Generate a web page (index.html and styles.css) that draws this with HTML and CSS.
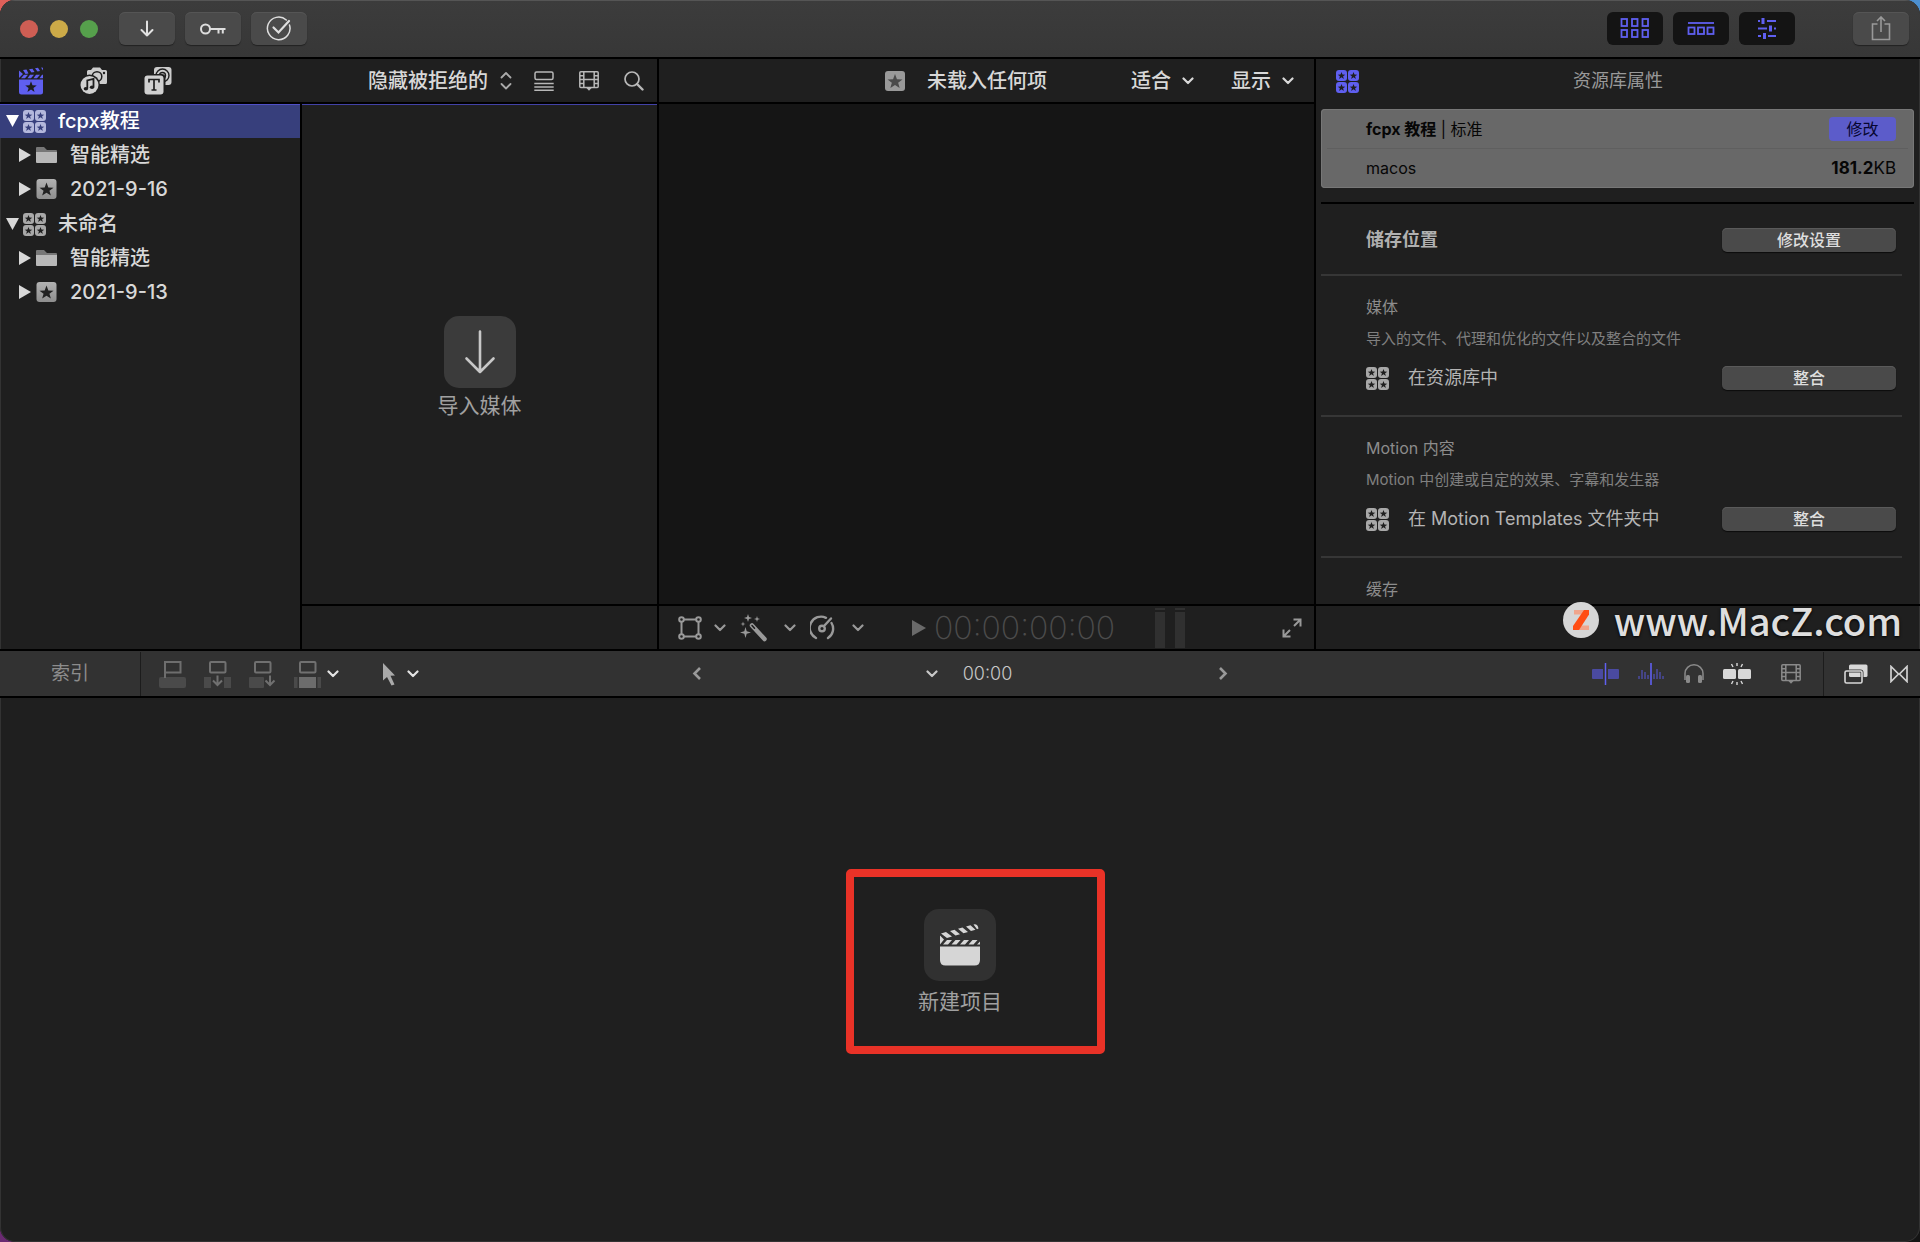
FILE: index.html
```html
<!DOCTYPE html>
<html lang="zh-CN">
<head>
<meta charset="utf-8">
<title>Final Cut Pro</title>
<link rel="stylesheet" href="styles.css">
</head>
<body>
<svg class="defs" aria-hidden="true">
  <defs>
    <path id="star" d="M0-5 1.3-1.5 5-1.4 2.1.8 3.1 4.3 0 2.2-3.1 4.3-2.1.8-5-1.4-1.3-1.5Z"/>
    <mask id="tile-mask" maskUnits="userSpaceOnUse" x="0" y="0" width="24" height="24">
      <rect width="24" height="24" fill="#fff"/>
      <g fill="#000">
        <use href="#star" transform="translate(5.5 5.7) scale(.76)"/>
        <use href="#star" transform="translate(17.5 5.7) scale(.76)"/>
        <use href="#star" transform="translate(5.5 17.7) scale(.76)"/>
        <use href="#star" transform="translate(17.5 17.7) scale(.76)"/>
      </g>
    </mask>
    <linearGradient id="silver" x1="0" y1="0" x2="0" y2="1">
      <stop offset="0" stop-color="#b2b2b2"/><stop offset="1" stop-color="#8e8e8e"/>
    </linearGradient>
    <symbol id="library" viewBox="0 0 23 23">
      <g mask="url(#tile-mask)" fill="currentColor">
        <rect width="11" height="11" rx="3"/><rect x="12" width="11" height="11" rx="3"/>
        <rect y="12" width="11" height="11" rx="3"/><rect x="12" y="12" width="11" height="11" rx="3"/>
      </g>
    </symbol>
    <symbol id="event" viewBox="0 0 20 20">
      <rect width="20" height="20" rx="3" fill="url(#silver)"/>
      <use href="#star" transform="translate(10 10.6) scale(1.4)" fill="#222"/>
    </symbol>
    <symbol id="folder" viewBox="0 0 21 16">
      <path d="M0 1Q0 0 1 0H8L11 3H20Q21 3 21 4V5H0Z" fill="#777"/>
      <path d="M0 5H21V15Q21 16 20 16H1Q0 16 0 15Z" fill="#b8b8b8"/>
    </symbol>
    <symbol id="chev" viewBox="0 0 12 8">
      <path d="M1.5 1.5 6 6 10.500 1.500" fill="none" stroke="currentColor" stroke-width="2.200" stroke-linecap="round" stroke-linejoin="round"/>
    </symbol>
    <symbol id="film" viewBox="0 0 20 20">
      <g fill="none" stroke="currentColor" stroke-width="1.500">
        <rect x=".8" y=".8" width="18.400" height="15.600" rx="1"/>
        <path d="M4.800 1V16.500M15.200 1V16.500M4.800 8.600H15.200M1 4.700H4.800M1 8.600H4.800M1 12.500H4.800M15.200 4.700H19M15.200 8.600H19M15.200 12.500H19"/>
      </g>
      <path d="M7 16.500H13L10 19.800Z" fill="currentColor"/>
    </symbol>
    <symbol id="right" viewBox="0 0 12 14"><path d="M0 0 12 7 0 14Z" fill="currentColor"/></symbol>
    <symbol id="down" viewBox="0 0 13 12"><path d="M0 0H13L6.500 12Z" fill="currentColor"/></symbol>
  </defs>
</svg>

<div class="window">
  <header class="titlebar">
    <div class="lights"><button class="light red" aria-label="关闭"></button><button class="light yellow" aria-label="最小化"></button><button class="light green" aria-label="缩放"></button></div>
    <div class="tools">
      <button class="tool" aria-label="导入">
        <svg width="14" height="18" viewBox="0 0 14 18" fill="none" stroke="#e2e2e2" stroke-width="2" stroke-linecap="round" stroke-linejoin="round"><path d="M7 1.500V15.500M1.500 10 7 15.500 12.500 10"/></svg>
      </button>
      <button class="tool" aria-label="关键词">
        <svg width="26" height="14" viewBox="0 0 26 14" fill="none" stroke="#dedede" stroke-width="2"><circle cx="5.500" cy="7" r="4.500"/><path d="M10 7H25.500M18.500 7V11.500M22.800 7V11.500"/></svg>
      </button>
      <button class="tool" aria-label="后台任务">
        <svg width="26" height="26" viewBox="0 0 26 26" fill="none" stroke="#dedede" stroke-width="1.500" stroke-linecap="round"><path d="M20.300 4A11.300 11.300 0 1 0 23.500 9"/><path d="M7.500 11.500 12.500 16.500 23 5" stroke-width="2.200"/></svg>
      </button>
    </div>
    <div class="views">
      <button class="tool dark" aria-label="浏览器">
        <svg width="30" height="22" viewBox="0 0 30 22" fill="none" stroke="#5f5ff0" stroke-width="1.800"><rect x="1.500" y="1" width="5.500" height="7"/><rect x="12" y="1" width="5.500" height="7"/><rect x="22.500" y="1" width="5.500" height="7"/><rect x="1.500" y="12" width="5.500" height="7"/><rect x="12" y="12" width="5.500" height="7"/><rect x="22.500" y="12" width="5.500" height="7"/></svg>
      </button>
      <button class="tool dark" aria-label="时间线">
        <svg width="28" height="22" viewBox="0 0 28 22" fill="none" stroke="#5f5ff0" stroke-width="1.800"><path d="M1 5H27"/><rect x="1.500" y="9.500" width="6" height="6.500"/><rect x="11" y="9.500" width="6" height="6.500"/><rect x="20.500" y="9.500" width="6" height="6.500"/></svg>
      </button>
      <button class="tool dark" aria-label="检查器">
        <svg width="20" height="22" viewBox="0 0 20 22" stroke="#5f5ff0" fill="none" stroke-width="1.800"><path d="M1 3H3M10 3H19M1 10.500H10M17 10.500H19M1 18H4M11 18H19"/><path d="M6 0V6M13.500 7.500V13.500M7.500 15V21" stroke-width="3"/></svg>
      </button>
    </div>
    <button class="tool" aria-label="共享">
      <svg width="20" height="26" viewBox="0 0 20 26" fill="none" stroke="#999" stroke-width="1.600"><path d="M6.500 8H1.500V23.500H18.500V8H13.500M10 16V1M6 5 10 1 14 5"/></svg>
    </button>
  </header>

  <main class="upper">
    <section class="library">
      <div class="bar librarybar">
        <button class="bare" aria-label="资源库">
          <svg width="26" height="28" viewBox="0 0 26 28"><g fill="#5f5ff0"><path d="M1 12.500H25V25Q25 27.500 22.500 27.500H3.500Q1 27.500 1 25Z"/><path d="M1 3.500 5 7 1 11ZM5 3 8.500 2.500 10.500 6.500 7.500 7ZM11 2.200 14.500 1.700 16.500 5 13.500 5.500ZM17 1.200 20 .8 22 4 19.500 4.500ZM23 .5 25 .8V3.500ZM6 7.800H10L7 11.300H3ZM12 7.800H16L13 11.300H9.500ZM18 7.800H22L19 11.300H15.500ZM24 7.800H25V11.300H21.500Z"/></g><use href="#star" transform="translate(13 20) scale(1.150)" fill="#1e1e1e"/></svg>
        </button>
        <button class="bare" aria-label="照片和音频">
          <svg width="28" height="28" viewBox="0 0 28 28"><path d="M7 4.500Q7 3 8.500 3H11L13 .5H20L22 3H25.500Q27 3 27 4.500V15.500Q27 17 25.500 17H7Z" fill="#ccc"/><circle cx="17" cy="9.500" r="4.800" fill="#ccc" stroke="#1e1e1e" stroke-width="1.500"/><circle cx="24" cy="6" r="1.200" fill="#1e1e1e"/><circle cx="9.500" cy="18" r="10.500" fill="#1e1e1e"/><circle cx="9.500" cy="18" r="9" fill="#d0d0d0"/><path d="M7.300 21.500V13.500L13.500 12V20" fill="none" stroke="#1e1e1e" stroke-width="1.800"/><ellipse cx="5.900" cy="21.700" rx="2.200" ry="1.800" fill="#1e1e1e"/><ellipse cx="12" cy="20.200" rx="2.200" ry="1.800" fill="#1e1e1e"/></svg>
        </button>
        <button class="bare" aria-label="字幕和发生器">
          <svg width="28" height="28" viewBox="0 0 28 28"><rect x="10" width="17.500" height="18" rx="3" fill="#ccc"/><g fill="none" stroke="#1e1e1e" stroke-width="1.400"><circle cx="18.500" cy="8.500" r="6.500"/><circle cx="18.500" cy="8.500" r="3"/></g><rect x="-1" y="7" width="22.500" height="22" rx="4" fill="#1e1e1e"/><rect x=".5" y="8.500" width="19" height="19" rx="3" fill="#d0d0d0"/><path d="M5 15.500V12.500H15V15.500M10 12.500V23M7.500 23H12.500" fill="none" stroke="#1e1e1e" stroke-width="1.700"/></svg>
        </button>
      </div>
      <ul class="tree">
        <li>
          <div class="node selected"><svg width="13" height="12"><use href="#down"/></svg><svg width="23" height="23"><use href="#library"/></svg><span>fcpx教程</span></div>
          <ul>
            <li class="node child"><svg width="12" height="14"><use href="#right"/></svg><svg width="21" height="16"><use href="#folder"/></svg><span>智能精选</span></li>
            <li class="node child"><svg width="12" height="14"><use href="#right"/></svg><svg width="21" height="20"><use href="#event"/></svg><span>2021-9-16</span></li>
          </ul>
        </li>
        <li>
          <div class="node"><svg width="13" height="12"><use href="#down"/></svg><svg class="gray" width="23" height="23"><use href="#library"/></svg><span>未命名</span></div>
          <ul>
            <li class="node child"><svg width="12" height="14"><use href="#right"/></svg><svg width="21" height="16"><use href="#folder"/></svg><span>智能精选</span></li>
            <li class="node child"><svg width="12" height="14"><use href="#right"/></svg><svg width="21" height="20"><use href="#event"/></svg><span>2021-9-13</span></li>
          </ul>
        </li>
      </ul>
    </section>

    <section class="browser">
      <div class="bar browserbar">
        <button class="bare filter">隐藏被拒绝的
          <svg width="12" height="18" viewBox="0 0 12 18" fill="none" stroke="#aaa" stroke-width="1.800" stroke-linecap="round" stroke-linejoin="round"><path d="M1.500 5.500 6 1 10.500 5.500M1.500 12 6 16.500 10.500 12"/></svg>
        </button>
        <button class="bare" aria-label="列表"><svg width="20" height="20" viewBox="0 0 20 20" fill="none" stroke="#b8b8b8" stroke-width="1.500"><rect x="1" y="1" width="18" height="7.500" rx="1.500"/><path d="M.3 12.500H19.700M.3 16H19.700M.3 19.200H19.700"/></svg></button>
        <button class="bare" aria-label="片段外观"><svg class="soft" width="20" height="20"><use href="#film"/></svg></button>
        <button class="bare" aria-label="搜索"><svg width="20" height="20" viewBox="0 0 20 20" fill="none" stroke="#b8b8b8" stroke-linecap="round"><circle cx="8" cy="8" r="7" stroke-width="1.700"/><path d="M13 13 18.500 18.500" stroke-width="2.400"/></svg></button>
      </div>
      <div class="clips">
        <button class="action">
          <span class="tile"><svg width="32" height="44" viewBox="0 0 32 44" fill="none" stroke="#c8c8c8" stroke-width="2.600" stroke-linecap="round" stroke-linejoin="round"><path d="M16 1.500V42M2.500 28.500 16 42 29.500 28.500"/></svg></span>
          <span>导入媒体</span>
        </button>
      </div>
      <div class="foot"></div>
    </section>

    <section class="viewer">
      <div class="bar viewerbar">
        <h1 class="name"><svg width="20" height="20" viewBox="0 0 20 20"><rect width="20" height="20" rx="3" fill="#999"/><use href="#star" transform="translate(10 10.600) scale(1.500)" fill="#4a4a4a"/></svg>未载入任何项</h1>
        <div class="menus">
          <button class="bare menu">适合<svg width="12" height="8"><use href="#chev"/></svg></button>
          <button class="bare menu">显示<svg width="12" height="8"><use href="#chev"/></svg></button>
        </div>
      </div>
      <div class="canvas"></div>
      <div class="foot viewerfoot">
        <div class="adjust">
          <button class="bare pair" aria-label="变换"><svg width="24" height="24" viewBox="0 0 24 24" fill="none" stroke="currentColor" stroke-width="2"><path d="M6 3.500H18M6 20.500H18M3.500 6V18M20.500 6V18"/><circle cx="3.500" cy="3.500" r="2.300"/><circle cx="20.500" cy="3.500" r="2.300"/><circle cx="3.500" cy="20.500" r="2.300"/><circle cx="20.500" cy="20.500" r="2.300"/></svg><svg width="12" height="8"><use href="#chev"/></svg></button>
          <button class="bare pair wand" aria-label="增强"><svg width="28" height="28" viewBox="0 0 28 28"><path d="M12 11.500 24.500 25" stroke="currentColor" stroke-width="4.500" stroke-linecap="round"/><path d="M12 11.500 14.500 14.200" stroke="#1e1e1e" stroke-width="1.500" stroke-linecap="round"/><path fill="currentColor" d="M8 0 9 3 12 4 9 5 8 8 7 5 4 4 7 3ZM17 2 17.700 4.300 20 5 17.700 5.700 17 8 16.300 5.700 14 5 16.300 4.300ZM3 7.500 3.600 9.400 5.500 10 3.600 10.600 3 12.500 2.400 10.600.5 10 2.400 9.400ZM5.500 13 6.700 17.300 11 18.500 6.700 19.700 5.500 24 4.300 19.700 0 18.500 4.300 17.300Z"/></svg><svg width="12" height="8"><use href="#chev"/></svg></button>
          <button class="bare pair wand" aria-label="重新定时"><svg width="26" height="26" viewBox="0 0 26 26" fill="none" stroke="currentColor" stroke-width="2.400" stroke-linecap="round"><path d="M6 23A11 11 0 0 1 16 2.800M21.500 8A11 11 0 0 1 18 23"/><circle cx="12" cy="13.500" r="2.800"/><path d="M14 11 21 3.500"/></svg><svg width="12" height="8"><use href="#chev"/></svg></button>
        </div>
        <div class="transport"><button class="bare" aria-label="播放"><svg width="14" height="16" viewBox="0 0 14 16"><path d="M0 0 14 8 0 16Z" fill="#6a6a6a"/></svg></button><span class="timecode">00:00:00:00</span></div>
        <div class="meters"><i></i><i></i></div>
        <button class="bare expand" aria-label="全屏幕"><svg width="20" height="20" viewBox="0 0 20 20" fill="none" stroke="#999" stroke-width="2"><path d="M11.500 1.500H18.500V8.500M18.500 1.500 12 8M1.500 11.500V18.500H8.500M1.500 18.500 8 12"/></svg></button>
      </div>
    </section>

    <section class="inspector">
      <div class="inspectorbar"><button class="bare" aria-label="资源库属性"><svg class="blue" width="23" height="23"><use href="#library"/></svg></button><h2>资源库属性</h2></div>
      <div class="props">
        <div class="card">
          <div class="cardrow"><span><b>fcpx 教程</b> | 标准</span><button class="modify">修改</button></div>
          <div class="cardrow"><span>macos</span><span class="size"><b>181.2</b>KB</span></div>
        </div>
        <div class="block place"><h3>储存位置</h3><button class="push">修改设置</button></div>
        <div class="block">
          <h4>媒体</h4><p>导入的文件、代理和优化的文件以及整合的文件</p>
          <div class="line"><svg class="gray" width="23" height="23"><use href="#library"/></svg><span>在资源库中</span><button class="push">整合</button></div>
        </div>
        <div class="block">
          <h4>Motion 内容</h4><p>Motion 中创建或自定的效果、字幕和发生器</p>
          <div class="line"><svg class="gray" width="23" height="23"><use href="#library"/></svg><span>在 Motion Templates 文件夹中</span><button class="push">整合</button></div>
        </div>
        <div class="block"><h4>缓存</h4></div>
      </div>
      <div class="foot"></div>
      <div class="watermark"><svg width="36" height="36" viewBox="0 0 36 36"><circle cx="18" cy="18" r="18" fill="#d6d6d6"/><path d="M11 8H26V12.500H11ZM11 23.500H26V28H11Z" fill="#f0a58c"/><path d="M21 8H26V12.500L16 28H10V24Z" fill="#ff4d14"/></svg><span>www.MacZ.com</span></div>
    </section>
  </main>

  <nav class="timebar">
    <button class="bare index">索引</button>
    <div class="edits">
      <button class="bare" aria-label="连接"><svg width="27" height="28" viewBox="0 0 27 28"><rect y="17" width="27" height="11" rx="2" fill="#4a4a4a"/><path d="M6 18V2H21.500V12.500H6" fill="none" stroke="#6e6e6e" stroke-width="2"/></svg></button>
      <button class="bare" aria-label="插入"><svg width="27" height="28" viewBox="0 0 27 28"><path d="M0 17H7V28H0ZM20 17H27V28H20Z" fill="#4a4a4a"/><g fill="none" stroke="#707070" stroke-width="2"><rect x="6" y="2" width="15.500" height="10.500" rx="1"/><path d="M13.500 15.500V25M9 20.500 13.500 25 18 20.500"/></g></svg></button>
      <button class="bare" aria-label="追加"><svg width="27" height="28" viewBox="0 0 27 28"><rect y="17" width="15" height="11" rx="1" fill="#4a4a4a"/><g fill="none" stroke="#707070" stroke-width="2"><rect x="6" y="2" width="15.500" height="10.500" rx="1"/><path d="M21 15.500V25M16.500 20.500 21 25 25.500 20.500"/></g></svg></button>
      <button class="bare pair" aria-label="覆盖"><svg width="27" height="28" viewBox="0 0 27 28"><path d="M0 17H3.500V28H0ZM23.500 17H27V28H23.500Z" fill="#4a4a4a"/><rect x="5" y="17" width="17" height="11" fill="#6c6c6c"/><rect x="6" y="2" width="15.500" height="10.500" rx="1" fill="none" stroke="#707070" stroke-width="2"/></svg><svg class="bright" width="12" height="8"><use href="#chev"/></svg></button>
    </div>
    <button class="bare pair arrow" aria-label="选择工具"><svg width="12" height="23" viewBox="0 0 12 23"><path d="M0 0V17.500L4 14 8.500 22.500 11.500 21.500 7.500 12.800 12 12.500Z" fill="#aaa"/></svg><svg class="bright" width="12" height="8"><use href="#chev"/></svg></button>
    <div class="history">
      <button class="bare" aria-label="后退"><svg width="10" height="14" viewBox="0 0 10 14"><path d="M8 1 2.500 6.500 8 12" fill="none" stroke="#999" stroke-width="2.600"/></svg></button>
      <div class="project"><svg width="12" height="8"><use href="#chev"/></svg><span>00:00</span></div>
      <button class="bare" aria-label="前进"><svg width="10" height="14" viewBox="0 0 10 14"><path d="M2 1 7.500 6.500 2 12" fill="none" stroke="#999" stroke-width="2.600"/></svg></button>
    </div>
    <div class="toggles">
      <button class="bare" aria-label="浏览"><svg width="27" height="22" viewBox="0 0 27 22"><path d="M1 6H11V16H1Q0 16 0 15V7Q0 6 1 6ZM16 6H26Q27 6 27 7V15Q27 16 26 16H16Z" fill="#4a4aa0"/><path d="M13.500 0V22" stroke="#6060f0" stroke-width="1.500"/></svg></button>
      <button class="bare" aria-label="音频浏览"><svg width="27" height="22" viewBox="0 0 27 22" stroke="#4a4a9c" stroke-width="1.600"><path d="M1 13V16M4 7V16M7 9V16M10 12V16M16 11V16M19 6V16M22 9V16M25 13V16"/><path d="M13 0V22" stroke="#6060f0"/></svg></button>
      <button class="bare" aria-label="独奏"><svg width="20" height="20" viewBox="0 0 20 20"><path d="M1 16V9.500A9 8.700 0 0 1 19 9.500V16" fill="none" stroke="#8a8a8a" stroke-width="1.500"/><rect x="2" y="11" width="4" height="8" rx="1.500" fill="#8a8a8a"/><rect x="14" y="11" width="4" height="8" rx="1.500" fill="#8a8a8a"/></svg></button>
      <button class="bare" aria-label="吸附"><svg width="28" height="22" viewBox="0 0 28 22"><rect y="6" width="13" height="10" rx="1.500" fill="#d8d8d8"/><rect x="15" y="6" width="13" height="10" rx="1.500" fill="#d8d8d8"/><path d="M14 0V3M8.500 1 10 4M19.500 1 18 4M14 19V22M8.500 21 10 18M19.500 21 18 18" stroke="#d8d8d8" stroke-width="1.400"/></svg></button>
      <button class="bare appearance" aria-label="时间线外观"><svg width="20" height="20"><use href="#film"/></svg></button>
    </div>
    <div class="panels">
      <button class="bare" aria-label="效果"><svg width="24" height="20" viewBox="0 0 24 20"><rect x="5" y=".5" width="18.500" height="12.500" rx="1.500" fill="#d8d8d8"/><rect x="1" y="7" width="17" height="12" rx="1.500" fill="none" stroke="#303030" stroke-width="3"/><rect x="1" y="7" width="17" height="12" rx="1.500" fill="none" stroke="#d8d8d8" stroke-width="1.600"/></svg></button>
      <button class="bare" aria-label="转场"><svg width="18" height="18" viewBox="0 0 18 18" fill="none" stroke="#d0d0d0" stroke-width="1.700"><path d="M1 1.500V16.500L8.500 9ZM17 1.500V16.500L9.500 9Z"/></svg></button>
    </div>
  </nav>

  <section class="timeline">
    <button class="action newproject">
      <span class="tile dim"><svg width="40" height="42" viewBox="0 0 40 42" fill="#d6d6d6"><path d="M0 22.500H40V36Q40 41.500 34.500 41.500H5.500Q0 41.500 0 36Z"/><path d="M0 11.500 4 15.500 0 20.500ZM1 9.500 6 8 12 12.500 7 14ZM10 7 14.500 5.800 20 10.300 15.500 11.500ZM18 4.800 22.500 3.500 28 8 23.500 9.300ZM26 2.500 30.500 1.300 35.500 5.800 31 7ZM33.500.5Q37.500-.5 38.500 4.500L37 5.200ZM7 16H12L8 20.500H3ZM15.500 16H20.500L16.500 20.500H11.500ZM24 16H29L25 20.500H20ZM32.500 16H37.500L33.500 20.500H28.500ZM40 17.500V20.500H37Z"/></svg></span>
      <span>新建项目</span>
    </button>
    <div class="highlight"></div>
  </section>
</div>
</body>
</html>
```
FILE: styles.css
```css
* { box-sizing: border-box; }

html, body { height: 100%; margin: 0; }

body {
  overflow: hidden;
  background:
    radial-gradient(circle at 0 0, #e0605a 0 60px, transparent 61px),
    radial-gradient(circle at 100% 0, #4c8fd0 0 60px, transparent 61px),
    radial-gradient(circle at 100% 100%, #141414 0 60px, transparent 61px),
    #6a2a72;
  color: #d8d8d8;
  font: 500 20px/24px Inter, "Noto Sans CJK SC", sans-serif;
}

h1, h2, h3, h4, p, ul { margin: 0; padding: 0; font-size: inherit; font-weight: inherit; }
ul { list-style: none; }
svg { display: block; flex: none; }
button { font: inherit; color: inherit; padding: 0; border: 0; }
.defs { position: absolute; width: 0; height: 0; }

.window {
  display: flex;
  flex-direction: column;
  height: 100vh;
  border-radius: 15px;
  overflow: hidden;
  background: #1f1f1f;
  box-shadow: inset 0 0 0 1px #333;
}

/* title bar */
.titlebar {
  display: flex;
  align-items: center;
  height: 59px;
  padding: 0 11px 1px 20px;
  background: linear-gradient(#3c3c3c, #373737);
  border-top: 1px solid #555;
  border-bottom: 2px solid #000;
}
.lights { display: flex; gap: 12px; margin-right: 21px; }
.light { width: 18px; height: 18px; border-radius: 50%; }
.red { background: #cf5e54; }
.yellow { background: #ccaa48; }
.green { background: #56a04c; }
.tools, .views { display: flex; gap: 10px; }
.views { margin-left: auto; margin-right: 58px; }
.tool {
  display: grid;
  place-items: center;
  width: 56px;
  height: 33px;
  border-radius: 6px;
  background: #4a4a4a;
  box-shadow: 0 1px 1px #222, inset 0 1px #555;
}
.dark { background: #141414; box-shadow: none; }
.bare { display: flex; align-items: center; background: none; }

/* upper panes */
.upper {
  display: grid;
  grid-template-columns: 302px 357px minmax(0, 1fr) 604px;
  height: 592px;
  flex: none;
  border-bottom: 2px solid #000;
}
.upper > section { display: flex; flex-direction: column; min-height: 0; border-right: 2px solid #000; }
.bar { display: flex; align-items: center; height: 45px; flex: none; border-bottom: 2px solid #000; }
.foot { height: 45px; flex: none; border-top: 2px solid #000; }

.library .bar, .browser .bar { box-shadow: 0 1px #4242a8; }
.librarybar { gap: 36px; padding: 0 18px; }
.upper > .library { border-right: 0; }
.tree { flex: 1; border-right: 2px solid #000; display: flex; flex-direction: column; gap: 1px; }
.node { display: flex; align-items: center; height: 34px; padding-left: 6px; white-space: nowrap; }
.node svg + svg { margin-left: 4px; }
.node span { margin-left: 12px; }
.child { padding-left: 19px; }
.child svg + svg { margin-left: 5px; }
.child span { margin-left: 13px; }
.selected { background: #373f7c; color: #fff; box-shadow: inset 0 1px #5050c8; }
.selected svg + svg { color: #b4b8dc; }
svg.gray { color: #a8a8a8; }
svg.blue { color: #5f5ff0; }
svg.soft { color: #b8b8b8; }
svg.bright { color: #e4e4e4; }

.browserbar { justify-content: flex-end; gap: 25px; padding-right: 13px; }
.filter { gap: 12px; margin-right: -3px; }
.clips { flex: 1; display: grid; place-items: center; padding-top: 26px; }
.action { display: flex; flex-direction: column; align-items: center; gap: 6px; background: none; color: #a0a0a0; font-size: 21px; font-weight: 400; }
.tile { display: grid; place-items: center; width: 72px; height: 72px; border-radius: 15px; background: #3b3b3b; }
.dim { background: #313131; }

.viewerbar { justify-content: flex-end; padding-right: 20px; }
.name { display: flex; align-items: center; gap: 22px; margin-right: 84px; }
.menus { display: flex; gap: 37px; }
.menu { gap: 11px; }
.canvas { flex: 1; background: #151515; }
.viewerfoot { display: flex; align-items: center; padding: 0 12px 0 19px; }
.adjust { display: flex; gap: 14px; color: #999; }
.pair { gap: 12px; }
.wand { gap: 16px; }
.transport { display: flex; align-items: center; gap: 8px; margin-left: 48px; }
.timecode { color: #4c4c4c; font-size: 32px; font-weight: 200; line-height: 40px; }
.meters { display: flex; gap: 10px; margin-left: auto; }
.meters i { width: 10px; height: 40px; background: linear-gradient(#303030 0 2px, #1e1e1e 2px 4px, #303030 4px); }
.expand { margin-left: 97px; }

/* inspector */
.upper > .inspector { position: relative; border-right: 0; }
.inspectorbar { display: grid; grid-template-columns: 23px 1fr 23px; align-items: center; height: 44px; padding: 0 20px; margin-bottom: 6px; flex: none; }
.inspectorbar h2 { color: #999; font-size: 18px; font-weight: 400; text-align: center; }
.props { flex: 1; min-height: 0; overflow: hidden; padding: 0 6px 0 5px; font-size: 16px; }
.card { height: 79px; padding: 0 6px; border-radius: 4px; background: #686868; color: #060606; font-weight: 400; box-shadow: inset 0 0 0 1px #777; }
.card b { font-weight: 700; }
.cardrow { display: flex; align-items: center; justify-content: space-between; height: 39px; padding: 0 12px 0 39px; }
.cardrow + .cardrow { border-top: 1px solid #5f5f5f; }
.size { font-size: 17px; }
.modify { width: 67px; height: 24px; border-radius: 4px; background: #5c5cca; color: #060630; }
.block { margin-right: 12px; padding: 19px 6px 0 45px; height: 141px; border-bottom: 2px solid #363636; }
.block h4, .block p { color: #8c8c8c; font-weight: 400; }
.block p { margin: 8px 0 15px; font-size: 15px; color: #808080; }
.place { display: flex; align-items: center; justify-content: space-between; height: 74px; margin: 14px 12px 0 0; padding: 2px 6px 0 45px; }
.card + .place { box-shadow: 0 -2px #000, 12px -2px #000; clip-path: inset(-2px -12px 0 0); background: #1f1f1f; }
.place h3 { font-size: 18px; font-weight: 700; color: #b0b0b0; }
.push { width: 174px; height: 24px; border-radius: 5px; background: #4a4a4a; color: #dedede; box-shadow: 0 1px 1px #0c0c0c, inset 0 1px #5a5a5a; }
.line { display: flex; align-items: center; gap: 19px; font-size: 18px; font-weight: 400; color: #b4b4b4; white-space: nowrap; }
.line .push { margin-left: auto; font-size: 16px; font-weight: 500; }
.watermark { position: absolute; right: 18px; bottom: 6px; display: flex; align-items: center; gap: 15px; color: #dedede; font: 500 38px/46px "Noto Sans CJK SC", sans-serif; text-shadow: 0 1px 3px #000; }

/* the first block is set off from the card by a full-width black rule */
.card + .place { margin-right: 0; padding-right: 18px; border-top: 2px solid #000; border-bottom: 0; box-shadow: none; clip-path: none; height: 72px; }
.place + .block { border-top: 2px solid #363636; height: 143px; }

/* timeline bar */
.timebar { display: flex; align-items: center; height: 47px; padding-top: 1px; flex: none; background: #323232; border-bottom: 2px solid #000; color: #999; }
.index { justify-content: center; width: 141px; align-self: stretch; border-right: 1px solid #1c1c1c; font-size: 19px; font-weight: 400; color: #8c8c8c; }
.edits { display: flex; gap: 18px; margin-left: 18px; }
.edits .pair { gap: 6px; }
.arrow { margin-left: 44px; gap: 12px; }
.history { display: flex; align-items: center; justify-content: space-between; width: 536px; margin-left: 273px; }
.project { display: flex; align-items: center; gap: 25px; margin-left: 18px; font-size: 18px; font-weight: 300; color: #c8c8c8; }
.toggles { display: flex; align-items: center; gap: 19px; margin-left: auto; padding-right: 22px; color: #8a8a8a; }
.appearance { margin-left: 11px; }
.panels { display: flex; align-items: center; gap: 22px; align-self: stretch; padding: 0 12px 0 20px; border-left: 1px solid #1c1c1c; }

.timeline { position: relative; flex: 1; display: grid; place-items: center; }
.newproject { gap: 9px; margin-bottom: 18px; }
.highlight { position: absolute; left: calc(50% - 114px); top: 171px; width: 259px; height: 185px; border: 8px solid #e93227; border-radius: 5px; }
```
